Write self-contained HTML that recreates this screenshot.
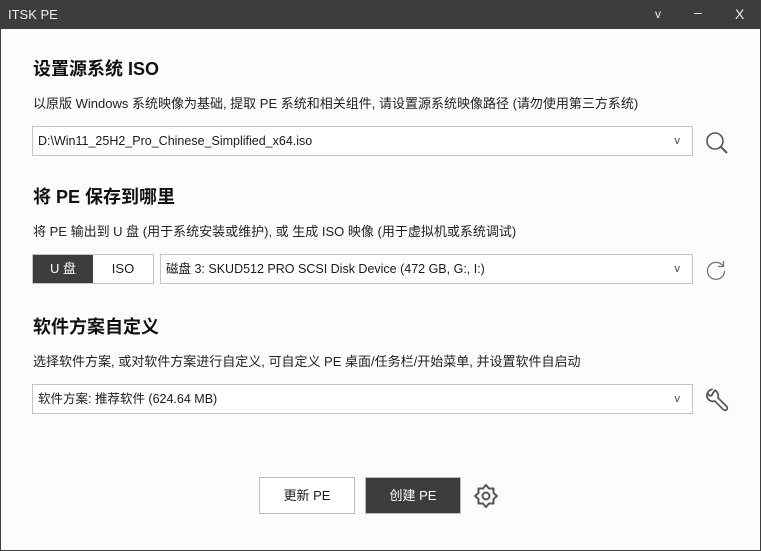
<!DOCTYPE html>
<html><head><meta charset="utf-8"><style>
*{margin:0;padding:0;box-sizing:border-box}
body{width:761px;height:551px;overflow:hidden;background:#fff;font-family:"Liberation Sans","Noto Sans CJK SC",sans-serif;color:#1a1a1a;position:relative}
.win{position:absolute;left:0;top:0;width:761px;height:551px;border:1px solid #3c3c3c;border-top:none;background:#fcfcfc}
.tb{position:absolute;left:0;top:0;width:761px;height:29px;background:#3d3d3d;color:#eee;font-size:13px}
.a{position:absolute;white-space:nowrap}
h2{position:absolute;left:33px;font-size:18px;font-weight:bold;color:#111}
.d{position:absolute;left:33px;font-size:13px;color:#222}
.cb{position:absolute;height:30px;border:1px solid #c4c4c4;background:#fff;font-size:12.5px;line-height:28px;padding-left:5px}
.cb .v{position:absolute;right:12px;top:0;font-size:11px;color:#444}
.btn{position:absolute;height:37px;width:96px;border:1px solid #bdbdbd;text-align:center;line-height:35px;font-size:13px}
</style></head><body>
<div class="win"></div>
<div class="tb"><span class="a" style="left:8px;top:7px">ITSK PE</span>
<span class="a" style="left:655px;top:7px;font-size:12px">v</span>
<span class="a" style="left:694px;top:4px;font-size:14px">–</span>
<span class="a" style="left:735px;top:6px;font-size:14px">X</span></div>

<h2 style="top:55px">设置源系统 ISO</h2>
<div class="d" style="top:93px">以原版 Windows 系统映像为基础, 提取 PE 系统和相关组件, 请设置源系统映像路径 (请勿使用第三方系统)</div>
<div class="cb" style="left:32px;top:126px;width:661px">D:\Win11_25H2_Pro_Chinese_Simplified_x64.iso<span class="v">v</span></div>
<svg class="a" style="left:704px;top:130px" width="26" height="26" viewBox="0 0 26 26"><circle cx="11" cy="11" r="8" fill="none" stroke="#555" stroke-width="1.6"/><line x1="16.5" y1="16.5" x2="23" y2="23" stroke="#555" stroke-width="2"/></svg>

<h2 style="top:183px">将 PE 保存到哪里</h2>
<div class="d" style="top:221px">将 PE 输出到 U 盘 (用于系统安装或维护), 或 生成 ISO 映像 (用于虚拟机或系统调试)</div>
<div class="a" style="left:32px;top:254px;width:122px;height:30px;border:1px solid #c4c4c4;background:#fff"></div>
<div class="a" style="left:33px;top:255px;width:60px;height:28px;background:#3d3d3d;color:#fff;font-size:13px;line-height:28px;text-align:center">U 盘</div>
<div class="a" style="left:93px;top:255px;width:60px;height:28px;font-size:13px;line-height:28px;text-align:center">ISO</div>
<div class="cb" style="left:160px;top:254px;width:533px">磁盘 3: SKUD512 PRO SCSI Disk Device (472 GB, G:, I:)<span class="v">v</span></div>
<svg class="a" style="left:704px;top:258px" width="24" height="24" viewBox="0 0 24 24"><path d="M19 8 A8.5 8.5 0 1 0 20.5 13" fill="none" stroke="#777" stroke-width="1.3"/><path d="M19.5 3 V8.5 H14" fill="none" stroke="#777" stroke-width="1.3"/></svg>

<h2 style="top:313px">软件方案自定义</h2>
<div class="d" style="top:351px">选择软件方案, 或对软件方案进行自定义, 可自定义 PE 桌面/任务栏/开始菜单, 并设置软件自启动</div>
<div class="cb" style="left:32px;top:384px;width:661px">软件方案: 推荐软件 (624.64 MB)<span class="v">v</span></div>
<svg class="a" style="left:703px;top:386px" width="28" height="28" viewBox="0 0 26 26"><path d="M9 3 A6 6 0 0 0 4 11 A6 6 0 0 0 11 14 L19 22 A2 2 0 0 0 22 19 L14 11 A6 6 0 0 0 11 4 L9 7 L8 9 L6 9 L4.5 7" fill="none" stroke="#555" stroke-width="1.6" stroke-linejoin="round"/></svg>

<div class="btn" style="left:259px;top:477px;background:#fff">更新 PE</div>
<div class="btn" style="left:365px;top:477px;background:#3d3d3d;color:#fff">创建 PE</div>
<svg class="a" style="left:473px;top:483px" width="26" height="26" viewBox="0 0 26 26"><path d="M13 2 L16 5.5 L20.5 5.5 L20.5 10 L24 13 L20.5 16 L20.5 20.5 L16 20.5 L13 24 L10 20.5 L5.5 20.5 L5.5 16 L2 13 L5.5 10 L5.5 5.5 L10 5.5 Z" fill="none" stroke="#555" stroke-width="2" stroke-linejoin="round"/><circle cx="13" cy="13" r="3.5" fill="none" stroke="#555" stroke-width="2"/></svg>
</body></html>
